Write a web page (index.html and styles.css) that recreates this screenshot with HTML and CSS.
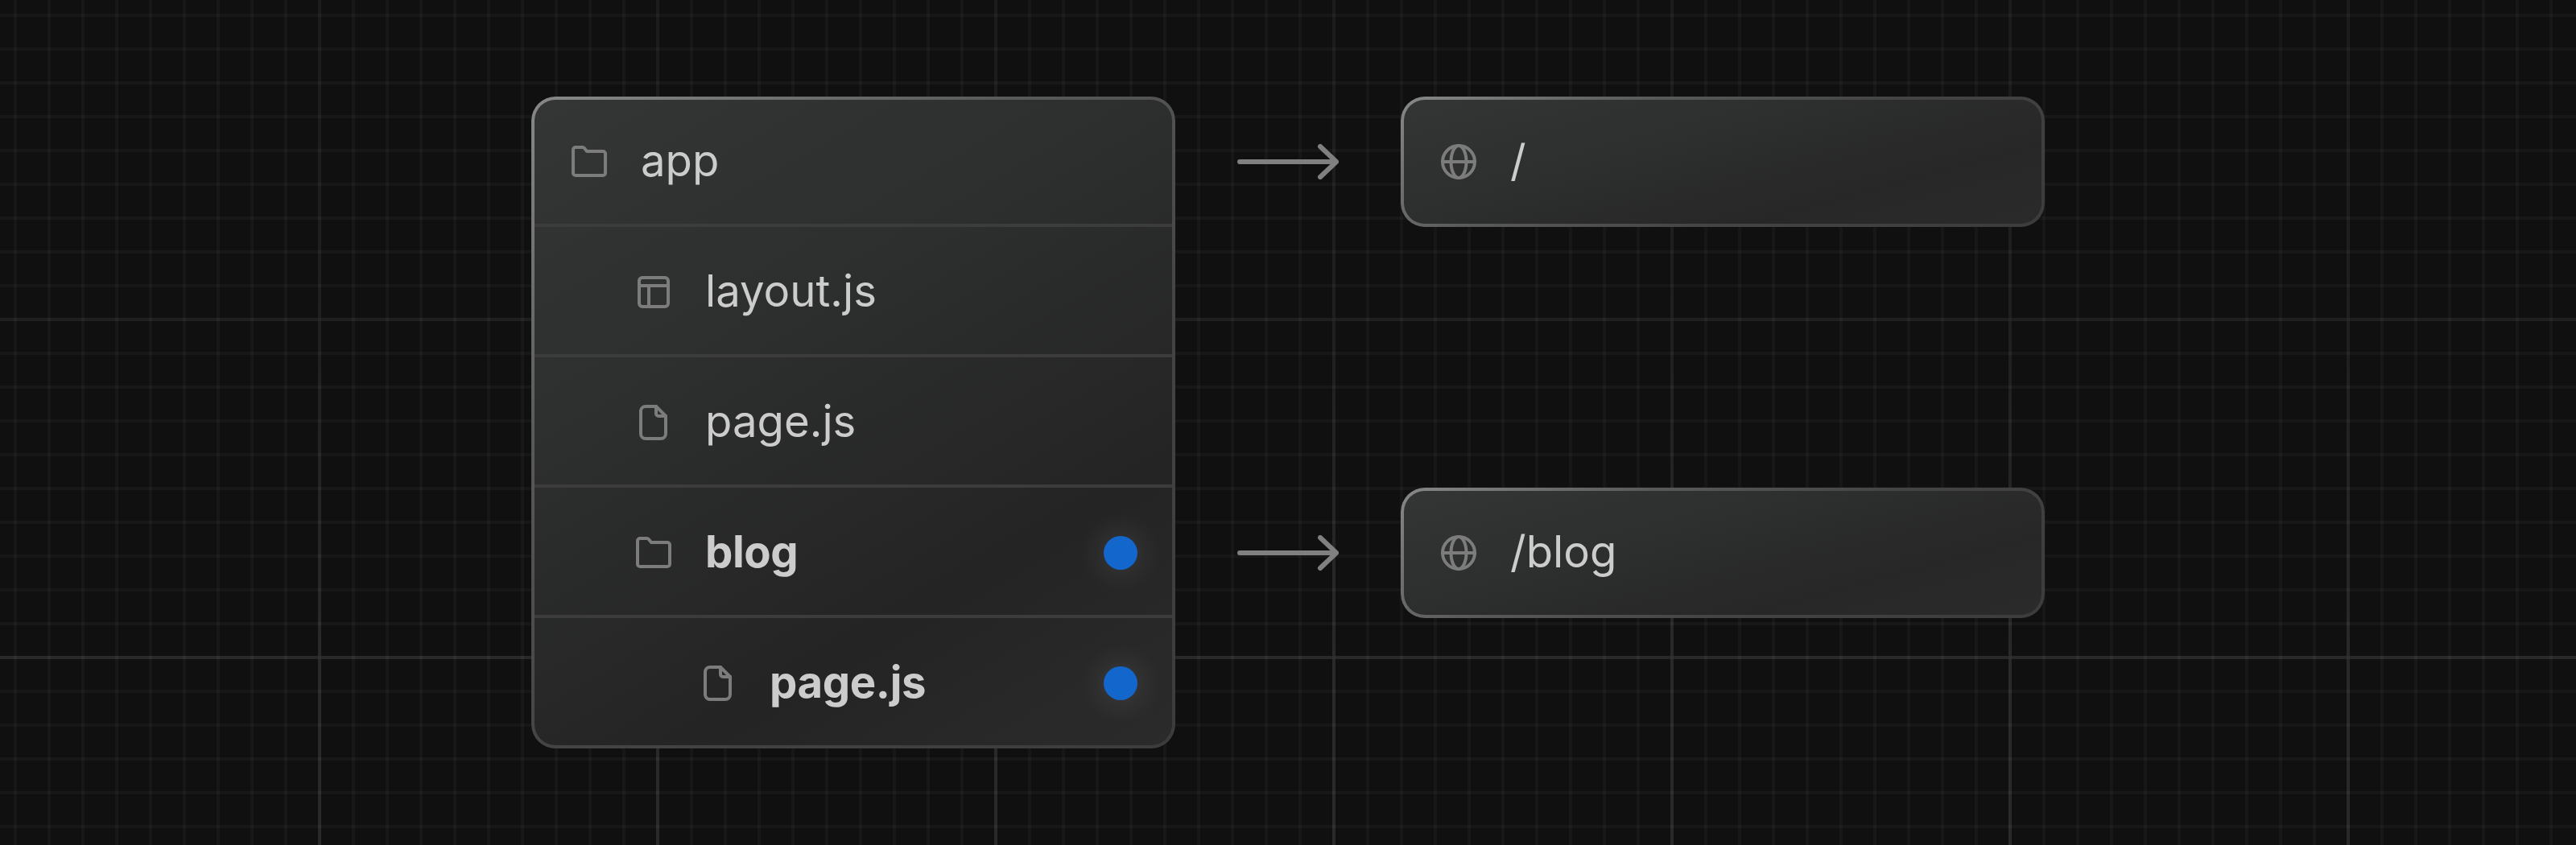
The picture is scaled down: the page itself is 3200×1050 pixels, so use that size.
FILE: index.html
```html
<!DOCTYPE html>
<html lang="en">
<head>
<meta charset="utf-8">
<title>Nested routes</title>
<link rel="stylesheet" href="styles.css">
</head>
<body>
<svg class="sprite" aria-hidden="true">
  <symbol id="i-folder" viewBox="0 0 48 48"><path d="M7 6H15.5a3 3 0 0 1 2.3 1.1L21 11H41a3 3 0 0 1 3 3V38a3 3 0 0 1-3 3H7a3 3 0 0 1-3-3V9a3 3 0 0 1 3-3Z"/></symbol>
  <symbol id="i-layout" viewBox="0 0 48 48"><rect x="6" y="6" width="36" height="36" rx="4"/><path d="M6 16H42M18 16V42"/></symbol>
  <symbol id="i-file" viewBox="0 0 48 48"><path d="M14 4H27L39 16V38a6 6 0 0 1-6 6H14a6 6 0 0 1-6-6V10a6 6 0 0 1 6-6Z"/><path d="M27 4V13a3 3 0 0 0 3 3H39"/></symbol>
  <symbol id="i-globe" viewBox="0 0 48 48"><circle cx="24" cy="24" r="20"/><ellipse cx="24" cy="24" rx="9.5" ry="20"/><path d="M4 24H44"/></symbol>
</svg>
<main class="diagram">
  <section class="panel tree">
    <div class="row">
      <svg class="icon"><use href="#i-folder"/></svg><span class="label">app</span>
    </div>
    <div class="row level-1">
      <svg class="icon"><use href="#i-layout"/></svg><span class="label">layout.js</span>
    </div>
    <div class="row level-1">
      <svg class="icon"><use href="#i-file"/></svg><span class="label">page.js</span>
    </div>
    <div class="row level-1 active">
      <svg class="icon"><use href="#i-folder"/></svg><span class="label">blog</span><i class="dot"></i>
    </div>
    <div class="row level-2 active">
      <svg class="icon"><use href="#i-file"/></svg><span class="label">page.js</span><i class="dot"></i>
    </div>
  </section>
  <svg class="arrow arrow-root" viewBox="0 0 126 44"><path d="M3 22H123M103 3L123 22L103 41"/></svg>
  <div class="panel route route-root">
    <svg class="icon"><use href="#i-globe"/></svg><span class="label">/</span>
  </div>
  <svg class="arrow arrow-blog" viewBox="0 0 126 44"><path d="M3 22H123M103 3L123 22L103 41"/></svg>
  <div class="panel route route-blog">
    <svg class="icon"><use href="#i-globe"/></svg><span class="label">/blog</span>
  </div>
</main>
</body>
</html>
```

FILE: styles.css
```css
* { box-sizing: border-box; }

html, body { margin: 0; height: 100%; }

body {
  width: 3200px;
  height: 1050px;
  overflow: hidden;
  font-family: Inter, "Liberation Sans", sans-serif;
  color: #cccccc;
  background-color: #101010;
  background-image:
    linear-gradient(to right, rgba(255, 255, 255, 0.032) 4px, transparent 4px),
    linear-gradient(to bottom, rgba(255, 255, 255, 0.032) 4px, transparent 4px),
    linear-gradient(to bottom, rgba(16, 16, 16, 0.75) 0, rgba(16, 16, 16, 0.55) 400px, rgba(16, 16, 16, 0) 820px),
    linear-gradient(to right, #222222 4px, transparent 4px),
    linear-gradient(to bottom, #222222 4px, transparent 4px);
  background-size: 42px 42px, 42px 42px, 100% 100%, 420px 420px, 420px 420px;
  background-position: 17px 0, 0 17px, 0 0, 395px 0, 0 395px;
}

.sprite { display: none; }

.diagram {
  display: grid;
  grid-template-columns: 800px 280px 800px;
  grid-template-rows: repeat(5, 162px);
  padding: 120px 0 0 660px;
}

.panel {
  position: relative;
  border-radius: 30px;
  background: linear-gradient(150deg, #343636 0%, #2d2e2e 35%, #242424 72%, #2b2b2b 100%);
}

.panel::after {
  content: "";
  position: absolute;
  inset: 0;
  padding: 4px;
  border-radius: inherit;
  background: linear-gradient(145deg, #888888 0%, #5a5a5a 30%, #444444 60%, #3c3c3c 100%);
  -webkit-mask: linear-gradient(#000 0 0) content-box, linear-gradient(#000 0 0);
  -webkit-mask-composite: xor;
  mask-composite: exclude;
  pointer-events: none;
}

.tree {
  grid-column: 1;
  grid-row: 1 / span 5;
  display: grid;
  grid-template-rows: repeat(5, 162px);
}

.row, .route {
  display: flex;
  align-items: center;
  gap: 40px;
  padding-left: 48px;
  padding-right: 48px;
  font-size: 54.5px;
  line-height: 1;
}

.label { margin-bottom: 3px; }

.row { box-shadow: inset 0 -4px 0 #3c3c3c; }
.row:last-child { box-shadow: none; }

.level-1 { padding-left: 128px; }
.level-2 { padding-left: 208px; }

.active {
  font-weight: 700;
  letter-spacing: -0.4px;
}

.icon {
  flex: none;
  width: 48px;
  height: 48px;
  fill: none;
  stroke: #7c7c7c;
  stroke-width: 4;
  stroke-linecap: round;
  stroke-linejoin: round;
}

.dot {
  flex: none;
  width: 42px;
  height: 42px;
  margin-left: auto;
  margin-right: -1px;
  border-radius: 50%;
  background: #1367cc;
  box-shadow: 0 0 36px 6px rgba(255, 255, 255, 0.1);
}

.arrow {
  grid-column: 2;
  justify-self: center;
  align-self: center;
  width: 126px;
  height: 44px;
  fill: none;
  stroke: #808080;
  stroke-width: 6;
  stroke-linecap: round;
  stroke-linejoin: round;
}

.route {
  grid-column: 3;
  background: linear-gradient(165deg, #343636 0%, #2d2e2e 40%, #272727 72%, #2b2b2b 100%);
}

.arrow-root, .route-root { grid-row: 1; }
.arrow-blog, .route-blog { grid-row: 4; }
```
